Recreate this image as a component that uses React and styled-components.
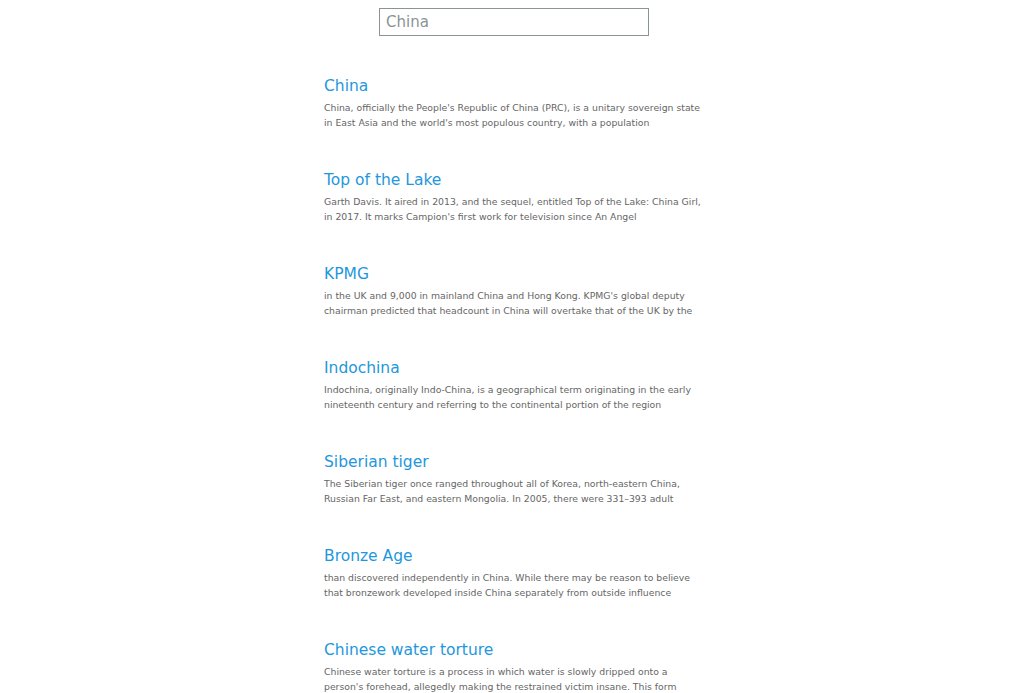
import React, { useState } from 'react';
import styled, { createGlobalStyle } from 'styled-components';

const GlobalStyle = createGlobalStyle`
  body {
    margin: 0;
    background: #ffffff;
    font-family: "DejaVu Sans", "Open Sans", sans-serif;
  }
`;

const Page = styled.div`
  display: flex;
  flex-direction: column;
  align-items: center;
  padding-top: 8px;
`;

const SearchInput = styled.input`
  box-sizing: border-box;
  width: 270px;
  height: 28px;
  border: 1px solid #8a9494;
  padding: 0 6px;
  font-family: "DejaVu Sans", sans-serif;
  font-size: 15px;
  color: #8a9494;
  outline: none;
`;

const Results = styled.div`
  width: 380px;
  margin-top: 39px;
  display: flex;
  flex-direction: column;
  gap: 39px;
`;

const Result = styled.div`
  display: flex;
  flex-direction: column;
  gap: 3px;
`;

const Title = styled.a`
  font-size: 15.5px;
  line-height: 22px;
  color: #1e97dc;
  text-decoration: none;
`;

const Snippet = styled.p`
  margin: 0;
  font-size: 9.3px;
  line-height: 15px;
  color: #666666;
  white-space: nowrap;
`;

const Line = styled.span`
  display: block;
`;

const results = [
  {
    title: 'China',
    lines: [
      "China, officially the People's Republic of China (PRC), is a unitary sovereign state",
      "in East Asia and the world's most populous country, with a population",
    ],
  },
  {
    title: 'Top of the Lake',
    lines: [
      'Garth Davis. It aired in 2013, and the sequel, entitled Top of the Lake: China Girl,',
      "in 2017. It marks Campion's first work for television since An Angel",
    ],
  },
  {
    title: 'KPMG',
    lines: [
      "in the UK and 9,000 in mainland China and Hong Kong. KPMG's global deputy",
      'chairman predicted that headcount in China will overtake that of the UK by the',
    ],
  },
  {
    title: 'Indochina',
    lines: [
      'Indochina, originally Indo-China, is a geographical term originating in the early',
      'nineteenth century and referring to the continental portion of the region',
    ],
  },
  {
    title: 'Siberian tiger',
    lines: [
      'The Siberian tiger once ranged throughout all of Korea, north-eastern China,',
      'Russian Far East, and eastern Mongolia. In 2005, there were 331–393 adult',
    ],
  },
  {
    title: 'Bronze Age',
    lines: [
      'than discovered independently in China. While there may be reason to believe',
      'that bronzework developed inside China separately from outside influence',
    ],
  },
  {
    title: 'Chinese water torture',
    lines: [
      'Chinese water torture is a process in which water is slowly dripped onto a',
      "person's forehead, allegedly making the restrained victim insane. This form",
    ],
  },
];

const App = () => {
  const [query, setQuery] = useState('China');

  return (
    <>
      <GlobalStyle />
      <Page>
        <SearchInput value={query} onChange={(e) => setQuery(e.target.value)} />
        <Results>
          {results.map((r) => (
            <Result key={r.title}>
              <Title href="#">{r.title}</Title>
              <Snippet>
                {r.lines.map((line, i) => (
                  <Line key={i}>{line}</Line>
                ))}
              </Snippet>
            </Result>
          ))}
        </Results>
      </Page>
    </>
  );
};

export default App;
